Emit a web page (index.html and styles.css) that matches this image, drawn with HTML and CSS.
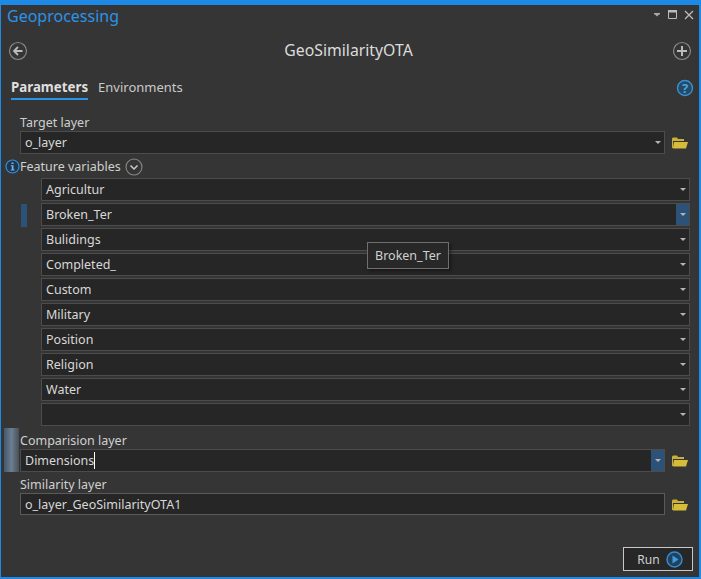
FILE: index.html
```html
<!DOCTYPE html>
<html lang="en">
<head>
<meta charset="utf-8">
<title>Geoprocessing</title>
<link rel="stylesheet" href="styles.css">
</head>
<body>
<div class="pane">
  <header class="titlebar">
    <span class="pane-title">Geoprocessing</span>
    <div class="win-controls">
      <svg width="10" height="6" viewBox="0 0 10 6"><path d="M2 1h6v1.500H7L5 4.500 3 2.500H2z" fill="#aaa"/></svg>
      <svg class="win-max" width="10" height="10" viewBox="0 0 10 10"><path d="M.5.500h8v8h-8z" fill="none" stroke="#bbb"/><path d="M0 0h9v2.500H0z" fill="#bbb"/></svg>
      <svg width="10" height="10" viewBox="0 0 10 10"><path d="M1 1l8 8M9 1l-8 8" fill="none" stroke="#bbb" stroke-width="1.300"/></svg>
    </div>
  </header>
  <div class="toolrow">
    <svg width="20" height="20" viewBox="0 0 20 20"><circle cx="10" cy="10" r="8.500" fill="none" stroke="#888" stroke-width="1.200"/><path d="M14.500 10h-8M10 6l-4 4 4 4" fill="none" stroke="#bbb" stroke-width="1.800"/></svg>
    <span class="tool-name">GeoSimilarityOTA</span>
    <svg width="20" height="20" viewBox="0 0 20 20"><circle cx="10" cy="10" r="8.500" fill="none" stroke="#888" stroke-width="1.200"/><path d="M10 5v10M5 10h10" fill="none" stroke="#bbb" stroke-width="2"/></svg>
  </div>
  <div class="tabs">
    <span class="tab active">Parameters</span>
    <span class="tab">Environments</span>
    <svg class="help" width="18" height="18" viewBox="0 0 18 18"><circle cx="9" cy="9" r="7.500" fill="#244a68" stroke="#3b8fd0" stroke-width="1.400"/><text x="9" y="13.500" text-anchor="middle" class="help-mark">?</text></svg>
  </div>

  <section class="params">
    <div class="field first">
      <label class="lbl">Target layer</label>
      <div class="input-row">
        <div class="combo"><span>o_layer</span><span class="arrow-cell"><i class="caret"></i></span></div>
        <svg class="folder" width="16" height="13" viewBox="0 0 16 13"><path d="M0 2.500V12h1.500L1 5h11V3H6L5 1.500H1z" fill="#c9b037"/><path d="M2 6h14l-2 6.500H1z" fill="#d6bc3a"/></svg>
      </div>
    </div>

    <div class="fv-head">
      <svg class="info" width="15" height="15" viewBox="0 0 15 15"><circle cx="7.500" cy="7.500" r="6.500" fill="#22364a" stroke="#2f8fe0" stroke-width="1.200"/><path d="M6.500 3.500h2v1.600h-2zM5.800 6.300h2.700v4.200h1v1H5.800v-1h1V7.300h-1z" fill="#6db6f2"/></svg>
      <span class="lbl">Feature variables</span>
      <svg width="18" height="18" viewBox="0 0 18 18"><circle cx="9" cy="9" r="8" fill="none" stroke="#888" stroke-width="1.100"/><path d="M5.500 7.500L9 11l3.500-3.500" fill="none" stroke="#ccc" stroke-width="1.500"/></svg>
    </div>

    <div class="vars">
      <div class="var-row"><div class="combo"><span>Agricultur</span><span class="arrow-cell"><i class="caret"></i></span></div></div>
      <div class="var-row selected"><i class="grip"></i><div class="combo"><span>Broken_Ter</span><span class="arrow-cell hot"><i class="caret"></i></span></div></div>
      <div class="var-row"><div class="combo"><span>Bulidings</span><span class="arrow-cell"><i class="caret"></i></span></div></div>
      <div class="var-row"><div class="combo"><span>Completed_</span><span class="arrow-cell"><i class="caret"></i></span></div></div>
      <div class="var-row"><div class="combo"><span>Custom</span><span class="arrow-cell"><i class="caret"></i></span></div></div>
      <div class="var-row"><div class="combo"><span>Military</span><span class="arrow-cell"><i class="caret"></i></span></div></div>
      <div class="var-row"><div class="combo"><span>Position</span><span class="arrow-cell"><i class="caret"></i></span></div></div>
      <div class="var-row"><div class="combo"><span>Religion</span><span class="arrow-cell"><i class="caret"></i></span></div></div>
      <div class="var-row"><div class="combo"><span>Water</span><span class="arrow-cell"><i class="caret"></i></span></div></div>
      <div class="var-row"><div class="combo"><span></span><span class="arrow-cell"><i class="caret"></i></span></div></div>
      <div class="tooltip">Broken_Ter</div>
    </div>

    <div class="field compare">
      <i class="drag-bar"></i>
      <label class="lbl">Comparision layer</label>
      <div class="input-row">
        <div class="combo"><span class="typed">Dimensions</span><span class="arrow-cell hot"><i class="caret"></i></span></div>
        <svg class="folder" width="16" height="13" viewBox="0 0 16 13"><path d="M0 2.500V12h1.500L1 5h11V3H6L5 1.500H1z" fill="#c9b037"/><path d="M2 6h14l-2 6.500H1z" fill="#d6bc3a"/></svg>
      </div>
    </div>

    <div class="field similar">
      <label class="lbl">Similarity layer</label>
      <div class="input-row">
        <div class="combo outlined"><span>o_layer_GeoSimilarityOTA1</span></div>
        <svg class="folder" width="16" height="13" viewBox="0 0 16 13"><path d="M0 2.500V12h1.500L1 5h11V3H6L5 1.500H1z" fill="#c9b037"/><path d="M2 6h14l-2 6.500H1z" fill="#d6bc3a"/></svg>
      </div>
    </div>
  </section>

  <footer class="actions">
    <button class="run" type="button">Run
      <svg width="17" height="17" viewBox="0 0 17 17"><circle cx="8.500" cy="8.500" r="7.500" fill="#22415c" stroke="#2f8fd8" stroke-width="1.400"/><path d="M6.500 4.500l6 4-6 4z" fill="#3f9be0"/></svg>
    </button>
  </footer>
</div>
</body>
</html>
```
FILE: styles.css
```css
* { box-sizing: border-box; }
html, body { margin: 0; padding: 0; height: 100%; }
body { background: #353535; font-family: "Noto Sans", "Open Sans", sans-serif; font-size: 12.5px; color: #d6d6d6; }
svg { display: block; flex: none; }

.pane { width: 701px; height: 579px; background: #353535; border: 2px solid #1c8ae6; border-width: 5px 2px 2px 1px; display: flex; flex-direction: column; }

.titlebar { height: 23px; display: flex; align-items: center; justify-content: space-between; padding: 0 5px 0 6px; }
.pane-title { font-size: 16px; color: #2b93ea; line-height: 22px; margin-top: -1px; }
.win-controls { display: flex; align-items: center; gap: 6px; margin-top: -4px; }

.toolrow { height: 22px; margin-top: 12px; padding: 0 7px; display: flex; align-items: center; justify-content: space-between; }
.tool-name { font-size: 15.8px; color: #dcdcdc; line-height: 20px; margin: -2px 3px 0 0; }

.tabs { position: relative; height: 25px; margin-top: 16px; padding-left: 10px; display: flex; gap: 10px; align-items: flex-start; }
.tab { height: 25px; line-height: 19px; font-size: 13px; color: #c9c9c9; }
.tab.active { font-size: 13.3px; font-weight: 700; color: #dfdfdf; border-bottom: 2px solid #2b93ea; height: 22px; }
.help { position: absolute; right: 5px; top: 1px; }
.help-mark { font-size: 13px; font-weight: 700; fill: #4aa3e2; font-family: "Noto Sans", sans-serif; }

.params { display: flex; flex-direction: column; }
.lbl { display: block; font-size: 12.5px; line-height: 17px; color: #d0d0d0; }
.field { padding-left: 19px; }
.field.first { margin-top: 11px; }
.input-row { display: flex; align-items: center; gap: 7px; }
.input-row > .combo { flex: none; width: 645px; }

.combo { height: 23px; flex: 1; display: flex; align-items: center; justify-content: space-between; background: #262626; border: 1px solid #4c4c4c; padding-left: 4px; font-size: 12.5px; color: #d8d8d8; }
.combo.outlined { border-color: #5a5a5a; }
.arrow-cell { width: 13px; height: 100%; display: flex; align-items: center; justify-content: center; }
.arrow-cell.hot { background: #2d5278; }
.caret { display: block; width: 0; height: 0; border-left: 3.500px solid transparent; border-right: 3.500px solid transparent; border-top: 3px solid #b5b5b5; }
.typed { border-right: 1px solid #fff; line-height: 17px; height: 17px; }

.fv-head { height: 24px; display: flex; align-items: center; padding: 1px 0 0 4px; }
.fv-head .lbl { margin-right: 4px; }
.vars { position: relative; display: flex; flex-direction: column; gap: 2px; padding-left: 40px; padding-right: 9px; }
.var-row { position: relative; height: 23px; display: flex; }
.grip { position: absolute; left: -20px; top: 1px; width: 6px; height: 23px; background: #2d5278; }
.tooltip { position: absolute; left: 366px; top: 64px; width: 82px; height: 27px; line-height: 25px; text-align: center; background: #282828; border: 1px solid #6f6f6f; font-size: 12.5px; color: #d0d0d0; box-shadow: 2px 2px 3px rgba(0,0,0,.4); }

.compare { position: relative; margin-top: 6px; }
.drag-bar { position: absolute; left: 3px; top: -4px; width: 15px; height: 44px; background: linear-gradient(90deg, #46586a, #6b7f92 50%, #4a4f55); }
.similar { margin-top: 4px; }
.similar .combo { height: 22px; }

.actions { margin-top: auto; padding: 0 6px 6px 0; display: flex; justify-content: flex-end; }
.run { width: 70px; height: 24px; padding: 0 0 0 4px; display: flex; align-items: center; justify-content: center; gap: 6px; background: #272727; border: 1px solid #c8c8c8; font: 12px "Noto Sans", sans-serif; color: #d0d0d0; }
```
